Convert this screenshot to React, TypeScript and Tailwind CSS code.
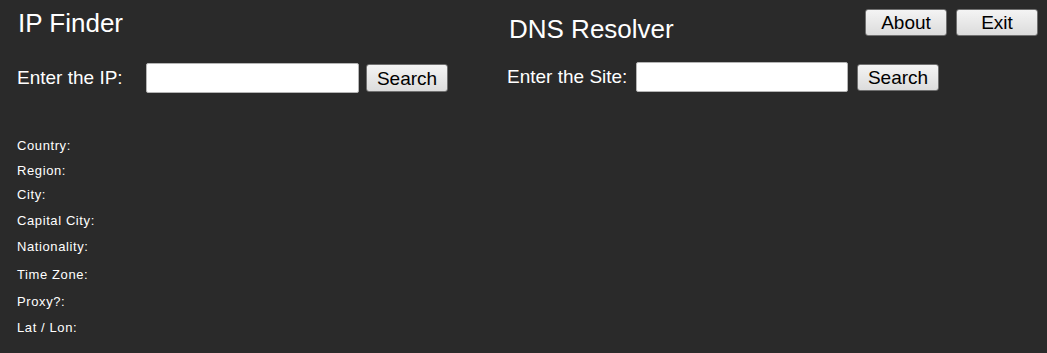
const fields = [
  { label: "Country:", row: "h-[25px]" },
  { label: "Region:", row: "h-[24px]" },
  { label: "City:", row: "h-[26px]" },
  { label: "Capital City:", row: "h-[26px]" },
  { label: "Nationality:", row: "h-[28px]" },
  { label: "Time Zone:", row: "h-[27px]" },
  { label: "Proxy?:", row: "h-[26px]" },
  { label: "Lat / Lon:", row: "h-[26px]" },
];

const btn =
  "rounded-[3px] border border-[#707070] bg-gradient-to-b from-[#f4f4f4] to-[#dcdcdc] text-[19px] leading-none text-black";

const App = () => {
  return (
    <div className="min-h-[353px] w-full bg-[#2a2a2a] font-['Liberation_Sans',Arial,sans-serif] text-white">
      <div className="flex">
        <section className="w-[490px] pl-[17px]">
          <h1 className="pl-px pt-[8px] text-[26px] leading-[30px]">IP Finder</h1>

          <div className="mt-[25px] flex h-[30px] items-center">
            <label className="w-[129px] text-[19px]">Enter the IP:</label>
            <input
              type="text"
              className="h-[30px] w-[213px] rounded-[2px] border border-[#b4b4b4] bg-white px-1 text-black outline-none"
            />
            <button className={`ml-[7px] h-[28px] w-[82px] ${btn}`}>Search</button>
          </div>

          <dl className="mt-[45px] text-[13px] leading-[16px] tracking-[0.6px]">
            {fields.map((f) => (
              <div key={f.label} className={f.row}>
                <dt>{f.label}</dt>
              </div>
            ))}
          </dl>
        </section>

        <section className="flex-1 pl-[17px]">
          <div className="flex items-start justify-between">
            <h2 className="pl-[2px] pt-[14px] text-[26px] leading-[30px]">DNS Resolver</h2>
            <div className="flex gap-[9px] pr-[9px] pt-[9px]">
              <button className={`h-[27px] w-[82px] ${btn}`}>About</button>
              <button className={`h-[27px] w-[82px] ${btn}`}>Exit</button>
            </div>
          </div>

          <div className="mt-[18px] flex h-[30px] items-center">
            <label className="w-[129px] text-[19px]">Enter the Site:</label>
            <input
              type="text"
              className="h-[30px] w-[212px] rounded-[2px] border border-[#b4b4b4] bg-white px-1 text-black outline-none"
            />
            <button className={`ml-[9px] h-[27px] w-[82px] ${btn}`}>Search</button>
          </div>
        </section>
      </div>
    </div>
  );
};

export default App;
